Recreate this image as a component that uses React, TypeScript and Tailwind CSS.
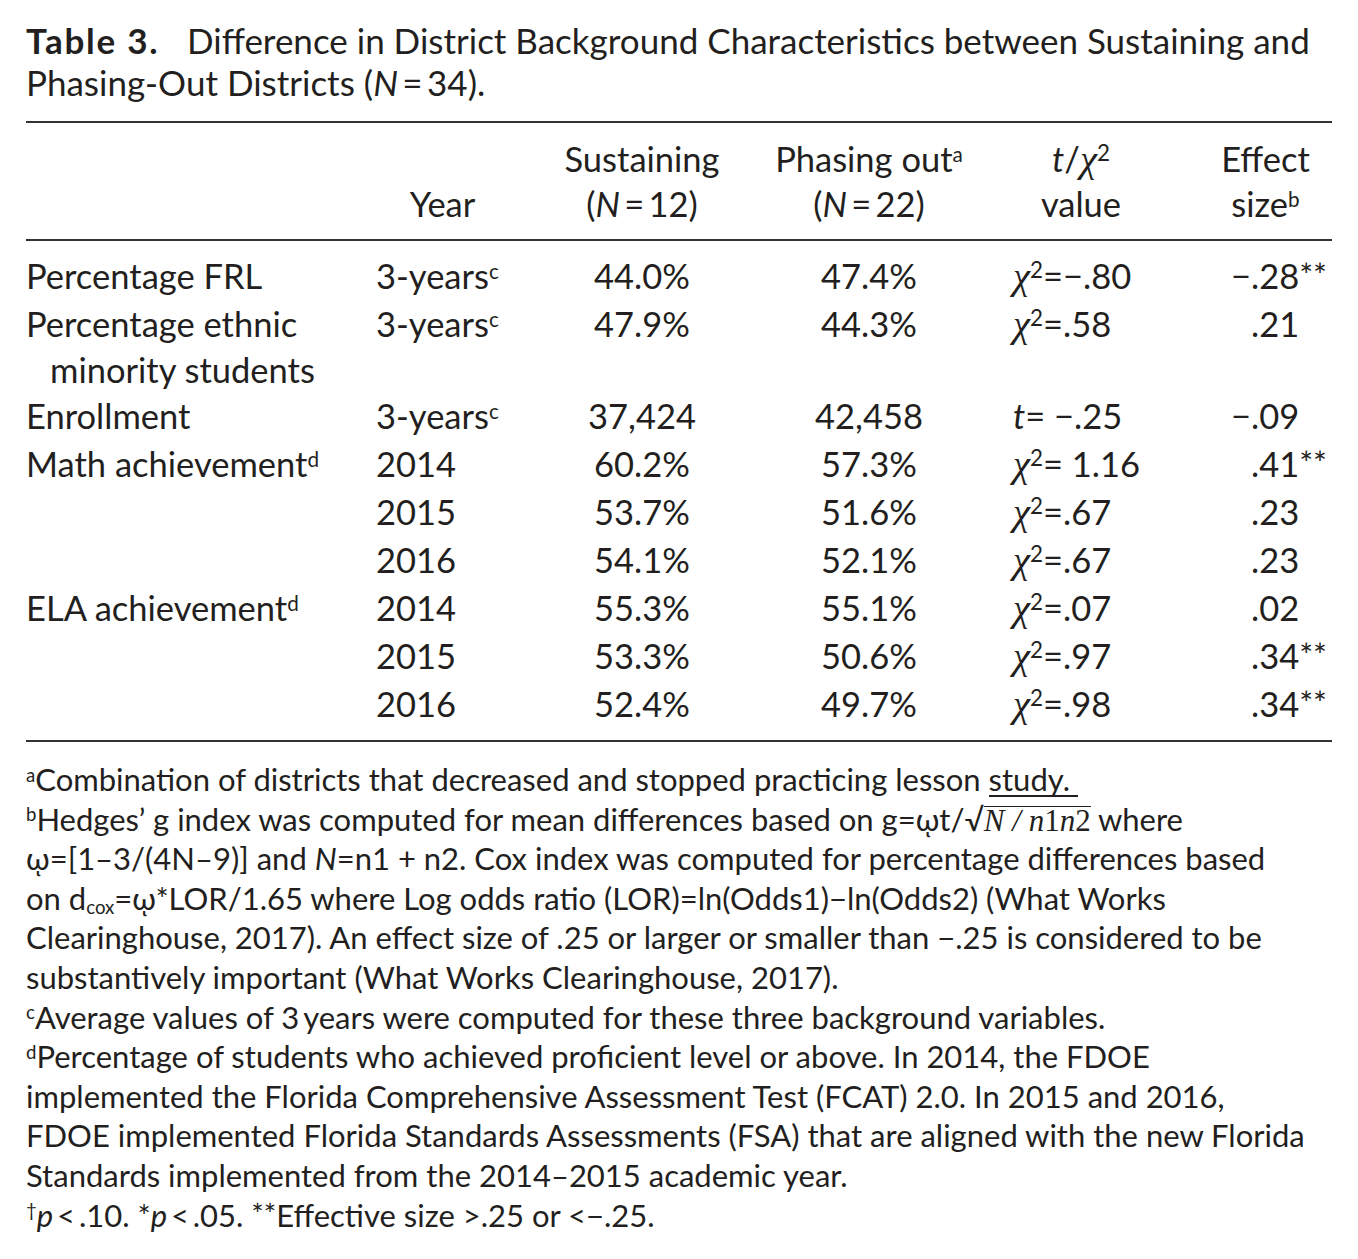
const sans = "font-['Lato','Open_Sans',sans-serif]";

function Sup({ children }: { children: React.ReactNode }) {
  return <sup className="text-[0.6em] leading-none">{children}</sup>;
}

function Chi() {
  return (
    <span className="leading-none">
      <span className="font-['Liberation_Serif',serif] italic text-[1.12em] leading-none">χ</span>
      <sup className="text-[0.65em] leading-none">2</sup>
    </span>
  );
}

function Stars() {
  return <span className="relative -top-[0.05em] text-[0.95em] leading-none">**</span>;
}

type Row = {
  label: React.ReactNode;
  year: React.ReactNode;
  sus: string;
  pha: string;
  stat: React.ReactNode;
  neg?: boolean;
  eff: string;
  star?: boolean;
};

const rows: Row[] = [
  { label: "Percentage FRL", year: <>3-years<Sup>c</Sup></>, sus: "44.0%", pha: "47.4%", stat: <><Chi />=−.80</>, neg: true, eff: ".28", star: true },
  {
    label: (
      <>
        <div>Percentage ethnic</div>
        <div className="pl-6 leading-[44px]">minority students</div>
      </>
    ),
    year: <>3-years<Sup>c</Sup></>, sus: "47.9%", pha: "44.3%", stat: <><Chi />=.58</>, eff: ".21",
  },
  { label: "Enrollment", year: <>3-years<Sup>c</Sup></>, sus: "37,424", pha: "42,458", stat: <><span className="italic">t</span>= −.25</>, neg: true, eff: ".09" },
  { label: <>Math achievement<Sup>d</Sup></>, year: "2014", sus: "60.2%", pha: "57.3%", stat: <><Chi />= 1.16</>, eff: ".41", star: true },
  { label: "", year: "2015", sus: "53.7%", pha: "51.6%", stat: <><Chi />=.67</>, eff: ".23" },
  { label: "", year: "2016", sus: "54.1%", pha: "52.1%", stat: <><Chi />=.67</>, eff: ".23" },
  { label: <>ELA achievement<Sup>d</Sup></>, year: "2014", sus: "55.3%", pha: "55.1%", stat: <><Chi />=.07</>, eff: ".02" },
  { label: "", year: "2015", sus: "53.3%", pha: "50.6%", stat: <><Chi />=.97</>, eff: ".34", star: true },
  { label: "", year: "2016", sus: "52.4%", pha: "49.7%", stat: <><Chi />=.98</>, eff: ".34", star: true },
];

const cols = "grid grid-cols-[350px_133px_266px_188px_236px_133px]";

export default function App() {
  return (
    <div className={`${sans} w-[1358px] h-[1259px] bg-white text-[#231f20] pl-[26px] pr-[26px] pt-[19px]`}>
      {/* caption */}
      <div className="text-[35px] leading-[42px] whitespace-nowrap">
        <div>
          <span className="inline-block w-[161px] font-bold tracking-[0.05em]">Table 3.</span>
          <span>Difference in District Background Characteristics between Sustaining and</span>
        </div>
        <div>
          Phasing-Out Districts (<span className="italic">N</span>&thinsp;=&thinsp;34).
        </div>
      </div>

      <div className="mt-[18px] w-[1306px] border-t-2 border-[#333]" />

      {/* head */}
      <div className={`${cols} text-[34.5px] leading-[45px] py-[13px] text-center whitespace-nowrap`}>
        <div />
        <div className="flex flex-col justify-end">Year</div>
        <div>
          <div>Sustaining</div>
          <div>(<span className="italic">N</span>&thinsp;=&thinsp;12)</div>
        </div>
        <div>
          <div>Phasing out<Sup>a</Sup></div>
          <div>(<span className="italic">N</span>&thinsp;=&thinsp;22)</div>
        </div>
        <div>
          <div><span className="italic">t</span>/<Chi /></div>
          <div>value</div>
        </div>
        <div>
          <div>Effect</div>
          <div>size<Sup>b</Sup></div>
        </div>
      </div>

      <div className="w-[1306px] border-t-2 border-[#333]" />

      {/* body */}
      <div className="text-[34.5px] leading-[48px] pt-[11px] pb-[12px]">
        {rows.map((r, i) => (
          <div key={i} className={cols}>
            <div className="whitespace-nowrap">{r.label}</div>
            <div className="h-[48px] whitespace-nowrap">{r.year}</div>
            <div className="h-[48px] text-center">{r.sus}</div>
            <div className="h-[48px] text-center">{r.pha}</div>
            <div className="h-[48px] pl-[50px] whitespace-nowrap">{r.stat}</div>
            <div className="h-[48px] pl-[32px] whitespace-nowrap">
              <span className={r.neg ? "" : "invisible"}>−</span>
              {r.eff}
              {r.star && <Stars />}
            </div>
          </div>
        ))}
      </div>

      <div className="w-[1306px] border-t-2 border-[#333]" />

      {/* notes */}
      <div className="pt-[18px] text-[31px] leading-[39.6px] whitespace-nowrap">
        <div>
          <Sup>a</Sup>Combination of districts that decreased and stopped practicing lesson{" "}
          <span className="border-b-2 border-[#231f20] pr-[8px] leading-[32px] inline-block">study.</span>
        </div>
        <div>
          <Sup>b</Sup>Hedges’ g index was computed for mean differences based on g=ῳt/√
          <span className="border-t border-[#231f20] font-['Liberation_Serif',serif] italic leading-[28px] inline-block">
            N / n<span className="not-italic">1</span>n<span className="not-italic">2</span>
          </span>{" "}
          where
        </div>
        <div>
          ῳ=[1–3/(4N–9)] and <span className="italic">N</span>=n1 + n2. Cox index was computed for percentage differences based
        </div>
        <div>
          on d<sub className="text-[0.6em]">cox</sub>=ῳ*LOR/1.65 where Log odds ratio (LOR)=ln(Odds1)−ln(Odds2) (What Works
        </div>
        <div>Clearinghouse, 2017). An effect size of .25 or larger or smaller than −.25 is considered to be</div>
        <div>substantively important (What Works Clearinghouse, 2017).</div>
        <div>
          <Sup>c</Sup>Average values of 3&thinsp;years were computed for these three background variables.
        </div>
        <div>
          <Sup>d</Sup>Percentage of students who achieved proficient level or above. In 2014, the FDOE
        </div>
        <div>implemented the Florida Comprehensive Assessment Test (FCAT) 2.0. In 2015 and 2016,</div>
        <div>FDOE implemented Florida Standards Assessments (FSA) that are aligned with the new Florida</div>
        <div>Standards implemented from the 2014–2015 academic year.</div>
        <div>
          <Sup>†</Sup><span className="italic">p</span>&thinsp;&lt;&thinsp;.10. *<span className="italic">p</span>&thinsp;&lt;&thinsp;.05. <Stars />Effective size &gt;.25 or &lt;−.25.
        </div>
      </div>
    </div>
  );
}
